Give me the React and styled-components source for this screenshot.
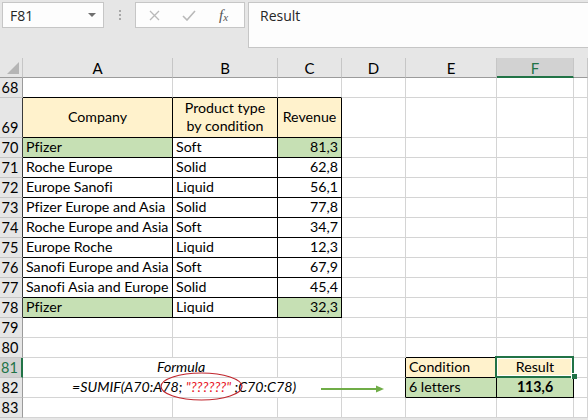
import React from 'react';
import styled, { createGlobalStyle } from 'styled-components';

const Global = createGlobalStyle`
  html, body { margin: 0; padding: 0; background: #e6e6e6; }
  body { width: 588px; height: 420px; overflow: hidden; font-family: Lato, "Noto Sans", sans-serif; font-variant-ligatures: none; }
`;

const Page = styled.div`
  width: 588px;
  height: 420px;
  background: #e6e6e6;
  display: flex;
  flex-direction: column;
  overflow: hidden;
`;

const Toolbar = styled.div`
  height: 58px;
  flex: none;
  box-sizing: border-box;
  padding: 2px 0 0 2px;
  display: flex;
  align-items: flex-start;
`;

const NameBox = styled.div`
  width: 102px;
  height: 26px;
  box-sizing: border-box;
  background: #fdfdfd;
  border: 1px solid #c6c6c6;
  display: flex;
  align-items: center;
  justify-content: space-between;
  padding: 0 6px 0 7px;
  font-family: "Open Sans", "Noto Sans", sans-serif;
  font-size: 14px;
  color: #262626;
`;

const Caret = styled.span`
  width: 0;
  height: 0;
  border-left: 4px solid transparent;
  border-right: 4px solid transparent;
  border-top: 4px solid #6f6f6f;
  margin-right: 1px;
`;

const Dots = styled.div`
  width: 31px;
  height: 26px;
  display: flex;
  flex-direction: column;
  align-items: center;
  justify-content: center;
  gap: 2px;
  span {
    width: 2px;
    height: 2px;
    background: #a8a8a8;
  }
`;

const FuncBox = styled.div`
  width: 110px;
  height: 26px;
  box-sizing: border-box;
  background: #fdfdfd;
  border: 1px solid #c6c6c6;
  display: flex;
  align-items: center;
  padding-left: 13px;
`;

const IconSlot = styled.span`
  display: flex;
  align-items: center;
  margin-right: ${p => p.$gap}px;
`;

const FxText = styled.span`
  font-family: "Liberation Serif", "DejaVu Serif", serif;
  font-style: italic;
  font-size: 15px;
  color: #555;
  sub {
    font-size: 11px;
    vertical-align: baseline;
    position: relative;
    top: 1px;
  }
`;

const FormulaInput = styled.div`
  margin-left: 3px;
  flex: 1;
  height: 46px;
  box-sizing: border-box;
  background: #fdfdfd;
  border: 1px solid #c6c6c6;
  border-right: none;
  padding: 3px 0 0 11px;
  font-family: "Open Sans", "Noto Sans", sans-serif;
  font-size: 14px;
  color: #262626;
`;

const SheetWrap = styled.div`
  position: relative;
  flex: 1;
`;

const Sheet = styled.div`
  display: grid;
  grid-template-columns: 23px 150px 105px 64px 64px 91px 77px 14px;
  grid-template-rows: 20px 20px 40px repeat(14, 20px);
  background: #fff;
`;

const Corner = styled.div`
  box-sizing: border-box;
  background: #e6e6e6;
  border-right: 1px solid #c6c6c6;
  border-bottom: 1px solid #9b9b9b;
  display: flex;
  align-items: flex-end;
  justify-content: flex-end;
  padding: 0 3px 3px 0;
`;

const CornerTri = styled.span`
  width: 0;
  height: 0;
  border-left: 12px solid transparent;
  border-bottom: 12px solid #b5b5b5;
`;

const ColHead = styled.div`
  box-sizing: border-box;
  background: ${p => (p.$sel ? '#d2d2d2' : '#e6e6e6')};
  border-right: 1px solid #c6c6c6;
  border-bottom: ${p => (p.$sel ? '2px solid #217346' : '1px solid #9b9b9b')};
  color: ${p => (p.$sel ? '#217346' : '#000')};
  display: flex;
  align-items: center;
  justify-content: center;
  font-size: 15px;
  padding-top: 1px;
`;

const RowHead = styled.div`
  box-sizing: border-box;
  background: ${p => (p.$sel ? '#d2d2d2' : '#e6e6e6')};
  border-right: ${p => (p.$sel ? '2px solid #217346' : `1px solid ${p.$dark ? '#3a3a3a' : '#9b9b9b'}`)};
  border-bottom: 1px solid #c6c6c6;
  color: ${p => (p.$sel ? '#217346' : '#000')};
  display: flex;
  align-items: flex-end;
  justify-content: center;
  padding: 0 2px 1px 0;
  font-size: 14.5px;
`;

const Cell = styled.div`
  box-sizing: border-box;
  grid-column: span ${p => p.$span || 1};
  background: ${p => p.$bg || '#fff'};
  border-right: 1px solid ${p => (p.$r ? '#000' : '#d4d4d4')};
  border-bottom: 1px solid ${p => (p.$b ? '#000' : '#d4d4d4')};
  display: flex;
  flex-direction: column;
  align-items: ${p => (p.$align === 'right' ? 'flex-end' : p.$align === 'center' ? 'center' : 'flex-start')};
  justify-content: ${p => (p.$middle ? 'center' : 'flex-end')};
  text-align: ${p => p.$align || 'left'};
  padding: ${p => (p.$pad ? `0 3px 1px ${p.$pad}px` : '0 3px 1px 3px')};
  font-size: 14.2px;
  line-height: 18px;
  color: #000;
  white-space: nowrap;
  font-style: ${p => (p.$italic ? 'italic' : 'normal')};
  font-weight: ${p => (p.$bold ? 700 : 400)};
`;

const Red = styled.span`
  color: #e8202a;
`;

const Overlay = styled.svg`
  position: absolute;
  left: 0;
  top: 0;
  width: 588px;
  height: 362px;
  pointer-events: none;
`;

const Selection = styled.div`
  position: absolute;
  left: 495px;
  top: 298px;
  width: 79px;
  height: 22px;
  box-sizing: border-box;
  border: 2px solid #217346;
  box-shadow: inset 0 0 0 1px #fff;
  pointer-events: none;
`;

const Handle = styled.div`
  position: absolute;
  left: 571px;
  top: 315px;
  width: 6px;
  height: 6px;
  box-sizing: border-box;
  background: #217346;
  border: 1px solid #fff;
  border-right: none;
  border-bottom: none;
`;

const YELLOW = '#fff2cc';
const GREEN = '#c6e0b4';

const data = [
  ['Pfizer', 'Soft', '81,3', true],
  ['Roche Europe', 'Solid', '62,8'],
  ['Europe Sanofi', 'Liquid', '56,1'],
  ['Pfizer Europe and Asia', 'Solid', '77,8'],
  ['Roche Europe and Asia', 'Soft', '34,7'],
  ['Europe Roche', 'Liquid', '12,3'],
  ['Sanofi Europe and Asia', 'Soft', '67,9'],
  ['Sanofi Asia and Europe', 'Solid', '45,4'],
  ['Pfizer', 'Liquid', '32,3', true],
];

const cols = ['A', 'B', 'C', 'D', 'E', 'F'];

function EmptyTail() {
  return (
    <>
      <Cell />
      <Cell />
      <Cell />
      <Cell />
    </>
  );
}

export default function App() {
  return (
    <>
      <Global />
      <Page>
        <Toolbar>
          <NameBox>
            <span>F81</span>
            <Caret />
          </NameBox>
          <Dots>
            <span />
            <span />
            <span />
          </Dots>
          <FuncBox>
            <IconSlot $gap={22}>
              <svg width="11" height="11" viewBox="0 0 11 11">
                <path d="M1 1 L10 10 M10 1 L1 10" stroke="#b9b9b9" strokeWidth="1.3" fill="none" />
              </svg>
            </IconSlot>
            <IconSlot $gap={23}>
              <svg width="14" height="11" viewBox="0 0 14 11">
                <path d="M1 6 L5 10 L13 1" stroke="#b9b9b9" strokeWidth="1.6" fill="none" />
              </svg>
            </IconSlot>
            <FxText>
              f<sub>x</sub>
            </FxText>
          </FuncBox>
          <FormulaInput>Result</FormulaInput>
        </Toolbar>
        <SheetWrap>
          <Sheet>
            <Corner>
              <CornerTri />
            </Corner>
            {cols.map(c => (
              <ColHead key={c} $sel={c === 'F'}>
                {c}
              </ColHead>
            ))}
            <ColHead />

            <RowHead>68</RowHead>
            <Cell $b />
            <Cell $b />
            <Cell $b />
            <EmptyTail />

            <RowHead $dark>69</RowHead>
            <Cell $bg={YELLOW} $r $b $align="center" $middle>
              Company
            </Cell>
            <Cell $bg={YELLOW} $r $b $align="center" $middle>
              <span>Product type</span>
              <span>by condition</span>
            </Cell>
            <Cell $bg={YELLOW} $r $b $align="center" $middle>
              Revenue
            </Cell>
            <EmptyTail />

            {data.map(([a, b, c, hl], i) => (
              <React.Fragment key={i}>
                <RowHead $dark>{70 + i}</RowHead>
                <Cell $r $b $bg={hl ? GREEN : undefined}>
                  {a}
                </Cell>
                <Cell $r $b>
                  {b}
                </Cell>
                <Cell $r $b $align="right" $bg={hl ? GREEN : undefined}>
                  {c}
                </Cell>
                <EmptyTail />
              </React.Fragment>
            ))}

            <RowHead>79</RowHead>
            <Cell />
            <Cell />
            <Cell />
            <EmptyTail />

            <RowHead>80</RowHead>
            <Cell />
            <Cell />
            <Cell />
            <Cell />
            <Cell $b />
            <Cell $b />
            <Cell />

            <RowHead $sel>81</RowHead>
            <Cell $span={2} $italic $pad={134}>
              Formula
            </Cell>
            <Cell />
            <Cell $r />
            <Cell $bg={YELLOW} $r $b>
              Condition
            </Cell>
            <Cell $bg={YELLOW} $r $b $align="center">
              Result
            </Cell>
            <Cell />

            <RowHead>82</RowHead>
            <Cell $span={3} $italic $pad={49}>
              <span>
                =SUMIF(A70:A78; <Red>"??????"</Red> ;C70:C78)
              </span>
            </Cell>
            <Cell $r />
            <Cell $bg={GREEN} $r $b>
              6 letters
            </Cell>
            <Cell $bg={GREEN} $r $b $align="center" $bold>
              113,6
            </Cell>
            <Cell />

            <RowHead>83</RowHead>
            <Cell />
            <Cell />
            <Cell />
            <EmptyTail />
          </Sheet>

          <Overlay viewBox="0 0 588 362">
            <ellipse cx="201.5" cy="328.5" rx="40.5" ry="13.5" fill="none" stroke="#c0262d" strokeWidth="1.2" />
            <line x1="321" y1="331" x2="377" y2="331" stroke="#70ad47" strokeWidth="2" />
            <polygon points="376,327.5 384,331 376,334.5" fill="#70ad47" />
          </Overlay>
          <Selection />
          <Handle />
        </SheetWrap>
      </Page>
    </>
  );
}
